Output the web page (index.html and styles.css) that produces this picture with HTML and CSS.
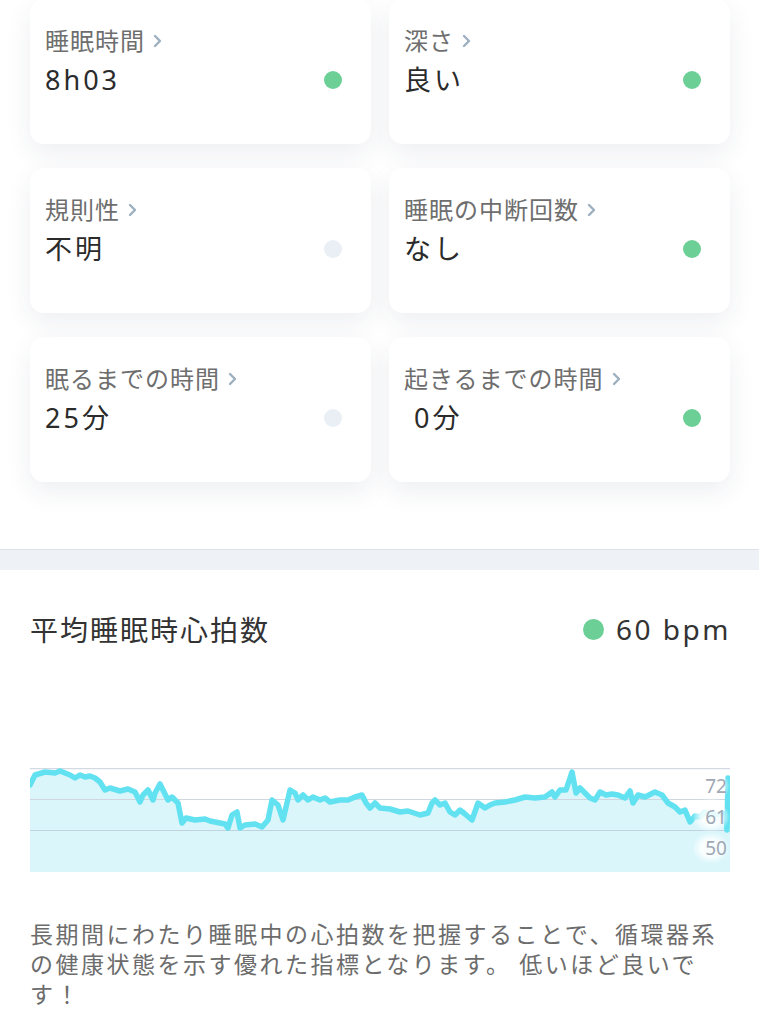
FILE: index.html
```html
<!DOCTYPE html>
<html lang="ja">
<head>
    <meta charset="UTF-8">
    <meta name="viewport" content="width=device-width, initial-scale=1.0">
    <title>睡眠スコア</title>
    <link rel="stylesheet" href="styles.css">
</head>
<body>

<div class="cards">
    <div class="card">
        <div class="card-label">睡眠時間<svg class="chevron" width="9" height="14" viewBox="0 0 9 14"><path d="M2 2 L7 7 L2 12" fill="none" stroke="#9db0c0" stroke-width="2.4" stroke-linecap="round" stroke-linejoin="round"/></svg></div>
        <div class="card-row">
            <span class="card-value">8h03</span>
            <span class="dot dot-good"></span>
        </div>
    </div>
    <div class="card">
        <div class="card-label">深さ<svg class="chevron" width="9" height="14" viewBox="0 0 9 14"><path d="M2 2 L7 7 L2 12" fill="none" stroke="#9db0c0" stroke-width="2.4" stroke-linecap="round" stroke-linejoin="round"/></svg></div>
        <div class="card-row">
            <span class="card-value">良い</span>
            <span class="dot dot-good"></span>
        </div>
    </div>
    <div class="card">
        <div class="card-label">規則性<svg class="chevron" width="9" height="14" viewBox="0 0 9 14"><path d="M2 2 L7 7 L2 12" fill="none" stroke="#9db0c0" stroke-width="2.4" stroke-linecap="round" stroke-linejoin="round"/></svg></div>
        <div class="card-row">
            <span class="card-value">不明</span>
            <span class="dot dot-none"></span>
        </div>
    </div>
    <div class="card">
        <div class="card-label">睡眠の中断回数<svg class="chevron" width="9" height="14" viewBox="0 0 9 14"><path d="M2 2 L7 7 L2 12" fill="none" stroke="#9db0c0" stroke-width="2.4" stroke-linecap="round" stroke-linejoin="round"/></svg></div>
        <div class="card-row">
            <span class="card-value">なし</span>
            <span class="dot dot-good"></span>
        </div>
    </div>
    <div class="card">
        <div class="card-label">眠るまでの時間<svg class="chevron" width="9" height="14" viewBox="0 0 9 14"><path d="M2 2 L7 7 L2 12" fill="none" stroke="#9db0c0" stroke-width="2.4" stroke-linecap="round" stroke-linejoin="round"/></svg></div>
        <div class="card-row">
            <span class="card-value">25分</span>
            <span class="dot dot-none"></span>
        </div>
    </div>
    <div class="card">
        <div class="card-label">起きるまでの時間<svg class="chevron" width="9" height="14" viewBox="0 0 9 14"><path d="M2 2 L7 7 L2 12" fill="none" stroke="#9db0c0" stroke-width="2.4" stroke-linecap="round" stroke-linejoin="round"/></svg></div>
        <div class="card-row">
            <span class="card-value">&nbsp;0分</span>
            <span class="dot dot-good"></span>
        </div>
    </div>
</div>

<div class="divider"></div>

<section class="heart">
    <div class="heart-header">
        <h2 class="heart-title">平均睡眠時心拍数</h2>
        <div class="heart-value"><span class="dot dot-good dot-big"></span>60 bpm</div>
    </div>

    <div class="chart">
        <svg class="chart-svg" width="700" height="104" viewBox="0 0 700 104">
            <polygon fill="#daf6fb" points="0,17 5,7 15,4 25,5 30,3 40,7 45,10 50,7 55,9 60,8 65,10 70,14 75,22 80,20 90,23 98,21 105,24 110,34 113,27 118,22 123,32 125,25 130,16 133,22 138,32 142,29 148,35 152,55 156,50 165,52 175,51 180,53 185,54 195,56 198,60 202,47 207,44 210,60 215,57 225,56 232,59 238,52 242,32 248,37 253,52 260,22 265,25 268,32 273,27 278,32 283,29 290,32 295,30 300,34 310,32 318,32 325,29 332,27 336,35 340,40 345,35 350,40 360,41 370,44 378,43 390,47 398,45 402,35 405,32 410,37 415,35 420,44 425,47 430,42 435,46 442,52 448,35 455,40 460,37 465,35 475,34 485,32 495,29 505,30 515,29 522,24 525,29 530,22 536,22 542,4 546,25 550,20 560,30 565,32 570,24 576,27 582,26 588,27 595,30 600,23 603,35 608,27 615,29 625,24 632,27 638,35 645,39 650,44 655,42 660,54 665,48 670,49 675,44 682,47 690,46 696,46 697,62 698,10 700,10 700,104 0,104"/>
            <!-- グリッド -->
            <line x1="0" y1="0.5" x2="700" y2="0.5" stroke="#d3d9e3" stroke-width="1.5"/>
            <line x1="0" y1="31.5" x2="700" y2="31.5" stroke="#cfd6e0" stroke-width="1"/>
            <line x1="0" y1="62.5" x2="700" y2="62.5" stroke="#bfd3de" stroke-width="1"/>
            <polyline fill="none" stroke="#62e1f1" stroke-width="5.5" stroke-linejoin="round" stroke-linecap="round" points="0,17 5,7 15,4 25,5 30,3 40,7 45,10 50,7 55,9 60,8 65,10 70,14 75,22 80,20 90,23 98,21 105,24 110,34 113,27 118,22 123,32 125,25 130,16 133,22 138,32 142,29 148,35 152,55 156,50 165,52 175,51 180,53 185,54 195,56 198,60 202,47 207,44 210,60 215,57 225,56 232,59 238,52 242,32 248,37 253,52 260,22 265,25 268,32 273,27 278,32 283,29 290,32 295,30 300,34 310,32 318,32 325,29 332,27 336,35 340,40 345,35 350,40 360,41 370,44 378,43 390,47 398,45 402,35 405,32 410,37 415,35 420,44 425,47 430,42 435,46 442,52 448,35 455,40 460,37 465,35 475,34 485,32 495,29 505,30 515,29 522,24 525,29 530,22 536,22 542,4 546,25 550,20 560,30 565,32 570,24 576,27 582,26 588,27 595,30 600,23 603,35 608,27 615,29 625,24 632,27 638,35 645,39 650,44 655,42 660,54 665,48 670,49 675,44 682,47 690,46 696,46 697,62 698,10"/>
        </svg>
        <span class="chart-label label-72">72</span>
        <span class="chart-label label-61">61</span>
        <span class="chart-label label-50">50</span>
    </div>

    <p class="heart-text">長期間にわたり睡眠中の心拍数を把握することで、循環器系の健康状態を示す優れた指標となります。 低いほど良いです！</p>
</section>

</body>
</html>
```

FILE: styles.css
```css
body { margin: 0; background-color: #ffffff; font-family: "Noto Sans", "Noto Sans CJK JP", sans-serif; color: #333; }

.cards { display: grid; grid-template-columns: 341px 341px; column-gap: 18px; row-gap: 24px; padding: 0 30px; margin-top: -1px; }
.card { height: 145px; box-sizing: border-box; padding: 26px 29px 0 15px; background-color: #ffffff; border-radius: 14px; box-shadow: 0 10px 26px rgba(40, 55, 90, 0.08); }
.card-label { display: flex; align-items: center; font-size: 24px; line-height: 30px; letter-spacing: 1px; color: #6e6e6e; font-family: "Noto Sans CJK JP", sans-serif; }
.chevron { margin-left: 8px; margin-top: 1px; }
.card-row { display: flex; justify-content: space-between; align-items: center; margin-top: 8px; }
.card-value { font-size: 27px; line-height: 34px; letter-spacing: 3px; color: #2b2b2b; font-family: "Noto Sans", "Noto Sans CJK JP", sans-serif; }

.dot { display: inline-block; width: 18px; height: 18px; border-radius: 50%; }
.dot-good { background-color: #6ccf96; }
.dot-none { background-color: #e9eff5; }
.dot-big { width: 21px; height: 21px; margin-right: 12px; }

.divider { margin-top: 67px; height: 20px; border-top: 1px solid #dbe2ea; background-color: #eef2f6; }

.heart { padding: 38px 30px 0 30px; }
.heart-header { display: flex; justify-content: space-between; align-items: center; height: 42px; }
.heart-title { margin: 0; font-size: 28px; font-weight: normal; letter-spacing: 2px; color: #333; font-family: "Noto Sans CJK JP", sans-serif; }
.heart-value { display: flex; align-items: center; font-size: 28px; letter-spacing: 2.5px; color: #333; margin-right: -2px; }

.chart { position: relative; margin-top: 118px; width: 700px; height: 104px; }
.chart-svg { display: block; }
.chart-label { position: absolute; right: 1px; font-size: 19px; line-height: 22px; color: #9fa8b4; padding: 4px 2px 4px 12px; border-radius: 16px; background: radial-gradient(ellipse at center, rgba(255, 255, 255, 0.85) 40%, rgba(255, 255, 255, 0) 75%); }
.label-72 { top: 3px; }
.label-61 { top: 34px; }
.label-50 { top: 65px; }

.heart-text { margin: 46px 0 0 0; font-size: 23px; line-height: 30px; letter-spacing: 2.5px; color: #6c6c6c; font-family: "Noto Sans CJK JP", sans-serif; }
```
